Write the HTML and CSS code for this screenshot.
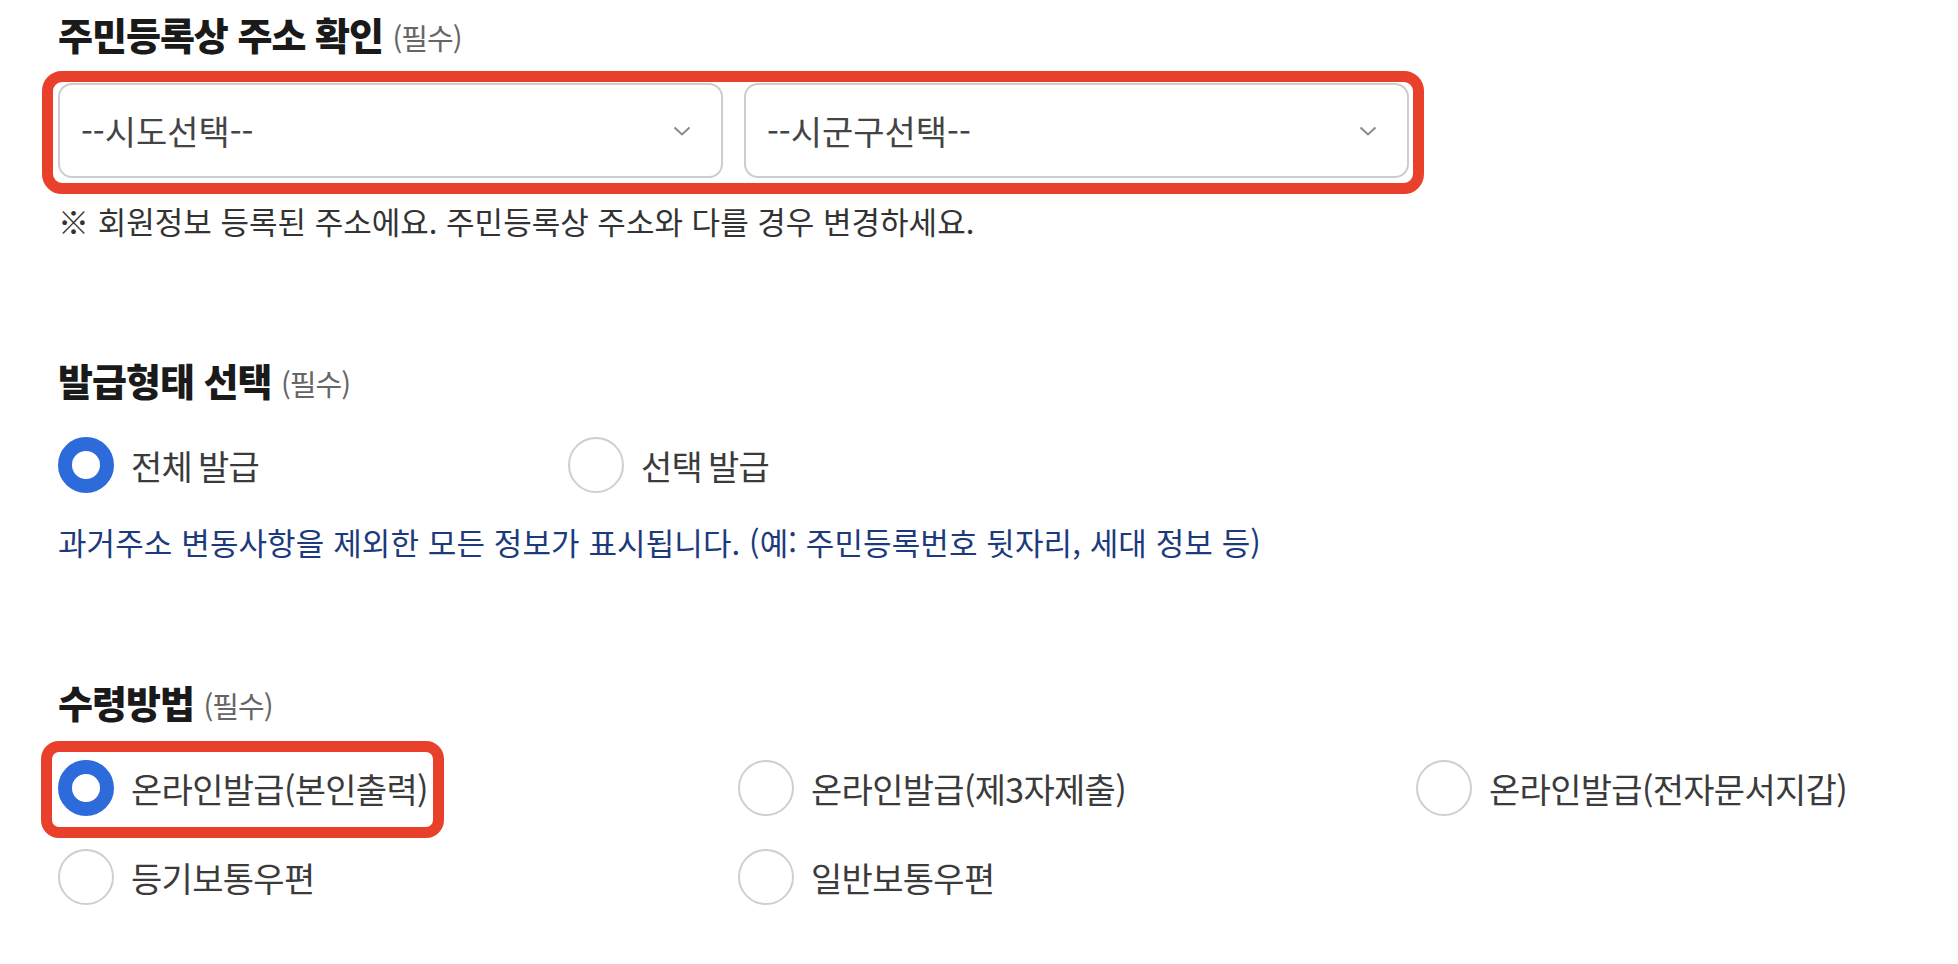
FILE: index.html
```html
<!DOCTYPE html>
<html lang="ko">
<head>
<meta charset="utf-8">
<title>신청</title>
<link rel="stylesheet" href="styles.css">
</head>
<body>
<div class="page">
  <section class="field field-address">
    <h2 class="field-title">주민등록상 주소 확인 <span class="req">(필수)</span></h2>
    <div class="select-row mark">
      <div class="select">
        <span class="select-text">--시도선택--</span>
        <svg class="chev" width="18" height="10" viewBox="0 0 18 10"><path d="M1.5 1.5 L9 8.5 L16.5 1.5" fill="none" stroke="#8a8a8a" stroke-width="2"/></svg>
      </div>
      <div class="select">
        <span class="select-text">--시군구선택--</span>
        <svg class="chev" width="18" height="10" viewBox="0 0 18 10"><path d="M1.5 1.5 L9 8.5 L16.5 1.5" fill="none" stroke="#8a8a8a" stroke-width="2"/></svg>
      </div>
    </div>
    <p class="hint">※ 회원정보 등록된 주소에요. 주민등록상 주소와 다를 경우 변경하세요.</p>
  </section>

  <section class="field field-type">
    <h2 class="field-title">발급형태 선택 <span class="req">(필수)</span></h2>
    <div class="radio-grid type-grid">
      <label class="radio-item"><span class="radio checked"></span><span class="radio-label">전체 발급</span></label>
      <label class="radio-item"><span class="radio"></span><span class="radio-label">선택 발급</span></label>
    </div>
    <p class="info">과거주소 변동사항을 제외한 모든 정보가 표시됩니다. (예: 주민등록번호 뒷자리, 세대 정보 등)</p>
  </section>

  <section class="field field-receive">
    <h2 class="field-title">수령방법 <span class="req">(필수)</span></h2>
    <div class="radio-grid receive-grid">
      <div class="cell"><label class="radio-item mark mark-item"><span class="radio checked"></span><span class="radio-label">온라인발급(본인출력)</span></label></div>
      <div class="cell"><label class="radio-item"><span class="radio"></span><span class="radio-label">온라인발급(제3자제출)</span></label></div>
      <div class="cell"><label class="radio-item"><span class="radio"></span><span class="radio-label">온라인발급(전자문서지갑)</span></label></div>
      <div class="cell"><label class="radio-item"><span class="radio"></span><span class="radio-label">등기보통우편</span></label></div>
      <div class="cell"><label class="radio-item"><span class="radio"></span><span class="radio-label">일반보통우편</span></label></div>
    </div>
  </section>
</div>
</body>
</html>
```

FILE: styles.css
```css
* { box-sizing: border-box; }
html, body { margin: 0; padding: 0; background: #fff; }
body {
  font-family: "Noto Sans CJK KR", "Noto Sans", sans-serif;
  color: #333;
}
.page {
  padding: 9px 0 0 58px;
}
.field-title {
  margin: 0;
  font-size: 38px;
  line-height: 50px;
  font-weight: 900;
  color: #1a1a1a;
  letter-spacing: -1px;
}
.req {
  font-size: 29px;
  font-weight: 400;
  color: #666;
  letter-spacing: -1px;
}
.mark { position: relative; }
.mark::after {
  content: "";
  position: absolute;
  border: 11px solid #e8402a;
  pointer-events: none;
}
.select-row {
  margin-top: 21px;
  width: 1351px;
  display: flex;
  gap: 21px;
}
.select-row::after {
  top: -12px; bottom: -16px; left: -16px; right: -15px;
  border-radius: 20px;
}
.select {
  flex: 1;
  height: 95px;
  border: 2px solid #cdcdcd;
  border-radius: 14px;
  display: flex;
  align-items: center;
  justify-content: space-between;
  padding: 0 30px 0 21px;
}
.select-text {
  font-size: 34px;
  color: #444;
  letter-spacing: 0;
}
.hint {
  margin: 23px 0 0;
  font-size: 31px;
  line-height: 40px;
  color: #333;
  letter-spacing: 0;
}
.field-type { margin-top: 114px; }
.radio-grid { display: grid; }
.type-grid {
  margin-top: 29px;
  grid-template-columns: 510px 510px;
}
.radio-item {
  display: inline-flex;
  align-items: center;
  gap: 17px;
  height: 56px;
}
.radio {
  width: 56px;
  height: 56px;
  border-radius: 50%;
  border: 2px solid #cfcfcf;
  background: #fff;
  flex: none;
}
.radio.checked {
  border: 14px solid #2d6bdb;
}
.radio-label {
  font-size: 34px;
  color: #3b3b3b;
  letter-spacing: -0.7px;
  word-spacing: -3px;
  white-space: nowrap;
}
.info {
  margin: 29px 0 0;
  font-size: 31px;
  line-height: 40px;
  color: #1c3a7c;
  letter-spacing: 0.1px;
}
.field-receive { margin-top: 115px; }
.receive-grid {
  margin-top: 30px;
  grid-template-columns: 680px 678px auto;
  row-gap: 28px;
}
.mark-item::after {
  top: -19px; bottom: -22px; left: -17px; right: -16px;
  border-radius: 18px;
}
```
